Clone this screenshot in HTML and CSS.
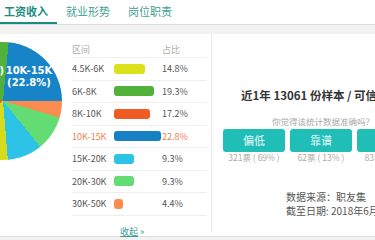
FILE: index.html
```html
<!DOCTYPE html>
<html lang="zh-CN">
<head>
  <meta charset="UTF-8" />
  <meta name="viewport" content="width=device-width, initial-scale=1.0"/>
  <title>工资收入</title>
  <link rel="stylesheet" href="styles.css">
</head>
<body>
  <div class="tabs">
    <div class="tab active">工资收入</div>
    <div class="tab">就业形势</div>
    <div class="tab">岗位职责</div>
  </div>
  <div class="band"></div>

  <div class="main">
    <div class="chart-col">
      <div class="pie">
        <div class="pie-label label-green">6K-8K<br>(19.3%)</div>
        <div class="pie-label label-blue">10K-15K<br>(22.8%)</div>
      </div>

      <div class="legend">
        <div class="row head">
          <span class="range">区间</span>
          <span class="bar-cell"></span>
          <span class="pct">占比</span>
        </div>
        <div class="row">
          <span class="range">4.5K-6K</span>
          <span class="bar-cell"><span class="bar yellow" style="width: 31px"></span></span>
          <span class="pct">14.8%</span>
        </div>
        <div class="row">
          <span class="range">6K-8K</span>
          <span class="bar-cell"><span class="bar green" style="width: 40px"></span></span>
          <span class="pct">19.3%</span>
        </div>
        <div class="row">
          <span class="range">8K-10K</span>
          <span class="bar-cell"><span class="bar red" style="width: 36px"></span></span>
          <span class="pct">17.2%</span>
        </div>
        <div class="row current">
          <span class="range">10K-15K</span>
          <span class="bar-cell"><span class="bar blue" style="width: 47px"></span></span>
          <span class="pct">22.8%</span>
        </div>
        <div class="row">
          <span class="range">15K-20K</span>
          <span class="bar-cell"><span class="bar cyan" style="width: 20px"></span></span>
          <span class="pct">9.3%</span>
        </div>
        <div class="row">
          <span class="range">20K-30K</span>
          <span class="bar-cell"><span class="bar lime" style="width: 20px"></span></span>
          <span class="pct">9.3%</span>
        </div>
        <div class="row">
          <span class="range">30K-50K</span>
          <span class="bar-cell"><span class="bar orange" style="width: 9px"></span></span>
          <span class="pct">4.4%</span>
        </div>
        <a class="fold" href="#">收起</a><span class="fold-arrow"> »</span>
      </div>
    </div>

    <div class="info-col">
      <h3 class="title">近1年 13061 份样本 / 可信度</h3>
      <p class="ask">你觉得该统计数据准确吗？</p>
      <div class="votes">
        <div class="vote">
          <div class="vote-btn">偏低</div>
          <div class="vote-count">321票 ( 69% )</div>
        </div>
        <div class="vote">
          <div class="vote-btn">靠谱</div>
          <div class="vote-count">62票 ( 13% )</div>
        </div>
        <div class="vote">
          <div class="vote-btn">偏高</div>
          <div class="vote-count">83票 ( 18% )</div>
        </div>
      </div>
      <p class="source">数据来源：职友集</p>
      <p class="source">截至日期: 2018年6月</p>
    </div>
  </div>
</body>
</html>
```

FILE: styles.css
```css
* {
  box-sizing: border-box;
  margin: 0;
  padding: 0;
}

body {
  width: 375px;
  height: 240px;
  overflow: hidden;
  background-color: #f2f2f2;
  font-family: "Noto Sans CJK SC", "Noto Sans", sans-serif;
  color: #555;
}

/* tab bar */
.tabs {
  display: flex;
  height: 25px;
  background-color: #fff;
  border-bottom: 1px solid #dcdcdc;
}

.tab {
  width: 62px;
  height: 24px;
  text-align: center;
  font-size: 11px;
  line-height: 22px;
  color: #3f9f92;
}

.tab:first-child {
  margin-left: -5px;
}

.tab.active {
  color: #1c8b7f;
  font-weight: bold;
  border-bottom: 2px solid #1c8b7f;
}

.band {
  height: 9px;
}

/* content */
.main {
  display: flex;
  height: 203px;
  background-color: #fff;
  border-bottom: 1px solid #dcdcdc;
}

.chart-col {
  display: flex;
  align-items: flex-start;
  width: 212px;
  height: 198px;
  flex-shrink: 0;
  border-right: 1px solid #e8e8e8;
}

.pie {
  position: relative;
  flex-shrink: 0;
  width: 118px;
  height: 118px;
  margin: 8px 0 0 -56px;
  border-radius: 50%;
  background: conic-gradient(
    #52b13a 0deg 5.5deg,
    #1784c7 5.5deg 90deg,
    #fb8c4f 90deg 106.3deg,
    #63dc74 106.3deg 140.8deg,
    #2cc3e7 140.8deg 175.3deg,
    #d6dc1c 175.3deg 230.2deg,
    #ef5b23 230.2deg 294deg,
    #52b13a 294deg 360deg
  );
}

.pie-label {
  position: absolute;
  font-family: "DejaVu Sans", sans-serif;
  font-size: 10px;
  font-weight: bold;
  line-height: 12px;
  color: #fff;
  text-align: center;
  white-space: nowrap;
}

.label-blue {
  left: 60px;
  top: 23px;
  width: 50px;
}

.label-green {
  right: 58px;
  top: 11px;
}

.legend {
  width: 135px;
  margin-left: 10px;
  padding-top: 8px;
}

.row {
  display: flex;
  align-items: center;
  height: 22.5px;
  border-bottom: 1px solid #eee;
  font-size: 9px;
  color: #555;
}

.row.head {
  height: 16px;
  color: #aaa;
}

.row.current {
  color: #ee8152;
}

.range {
  width: 42px;
  white-space: nowrap;
}

.bar-cell {
  display: flex;
  width: 48px;
}

.bar {
  display: block;
  height: 10px;
  border-radius: 3px;
}

.yellow { background-color: #dce11b; }
.green { background-color: #52b13a; }
.red { background-color: #ef5b23; }
.blue { background-color: #1680c2; }
.cyan { background-color: #2cc3e7; }
.lime { background-color: #63dc74; }
.orange { background-color: #fb8c4f; }

.fold {
  display: inline-block;
  margin-left: 48px;
  font-size: 9px;
  line-height: 12px;
  color: #3a9e93;
  text-decoration: underline;
}

.fold-arrow {
  font-size: 9px;
  color: #3a9e93;
}

/* right side */
.info-col {
  display: flex;
  flex-direction: column;
  align-items: flex-start;
  padding-top: 53px;
  white-space: nowrap;
}

.title {
  margin-left: 29px;
  font-size: 11.5px;
  line-height: 16px;
  font-weight: bold;
  color: #333;
}

.ask {
  margin: 12px 0 0 60px;
  font-size: 8.5px;
  line-height: 12px;
  color: #aaa;
}

.votes {
  display: flex;
  gap: 5px;
  margin: 2px 0 0 11px;
}

.vote {
  display: flex;
  flex-direction: column;
  align-items: center;
  flex-shrink: 0;
  width: 62px;
}

.vote-btn {
  width: 62px;
  height: 23px;
  border-radius: 3px;
  background-color: #21beb7;
  color: #eafaf9;
  font-size: 11px;
  line-height: 23px;
  text-align: center;
}

.vote-count {
  font-size: 8.5px;
  line-height: 10px;
  color: #aaa;
}

.source {
  margin-left: 74px;
  font-size: 10px;
  line-height: 14px;
  color: #555;
}

.votes + .source {
  margin-top: 28px;
}
```
